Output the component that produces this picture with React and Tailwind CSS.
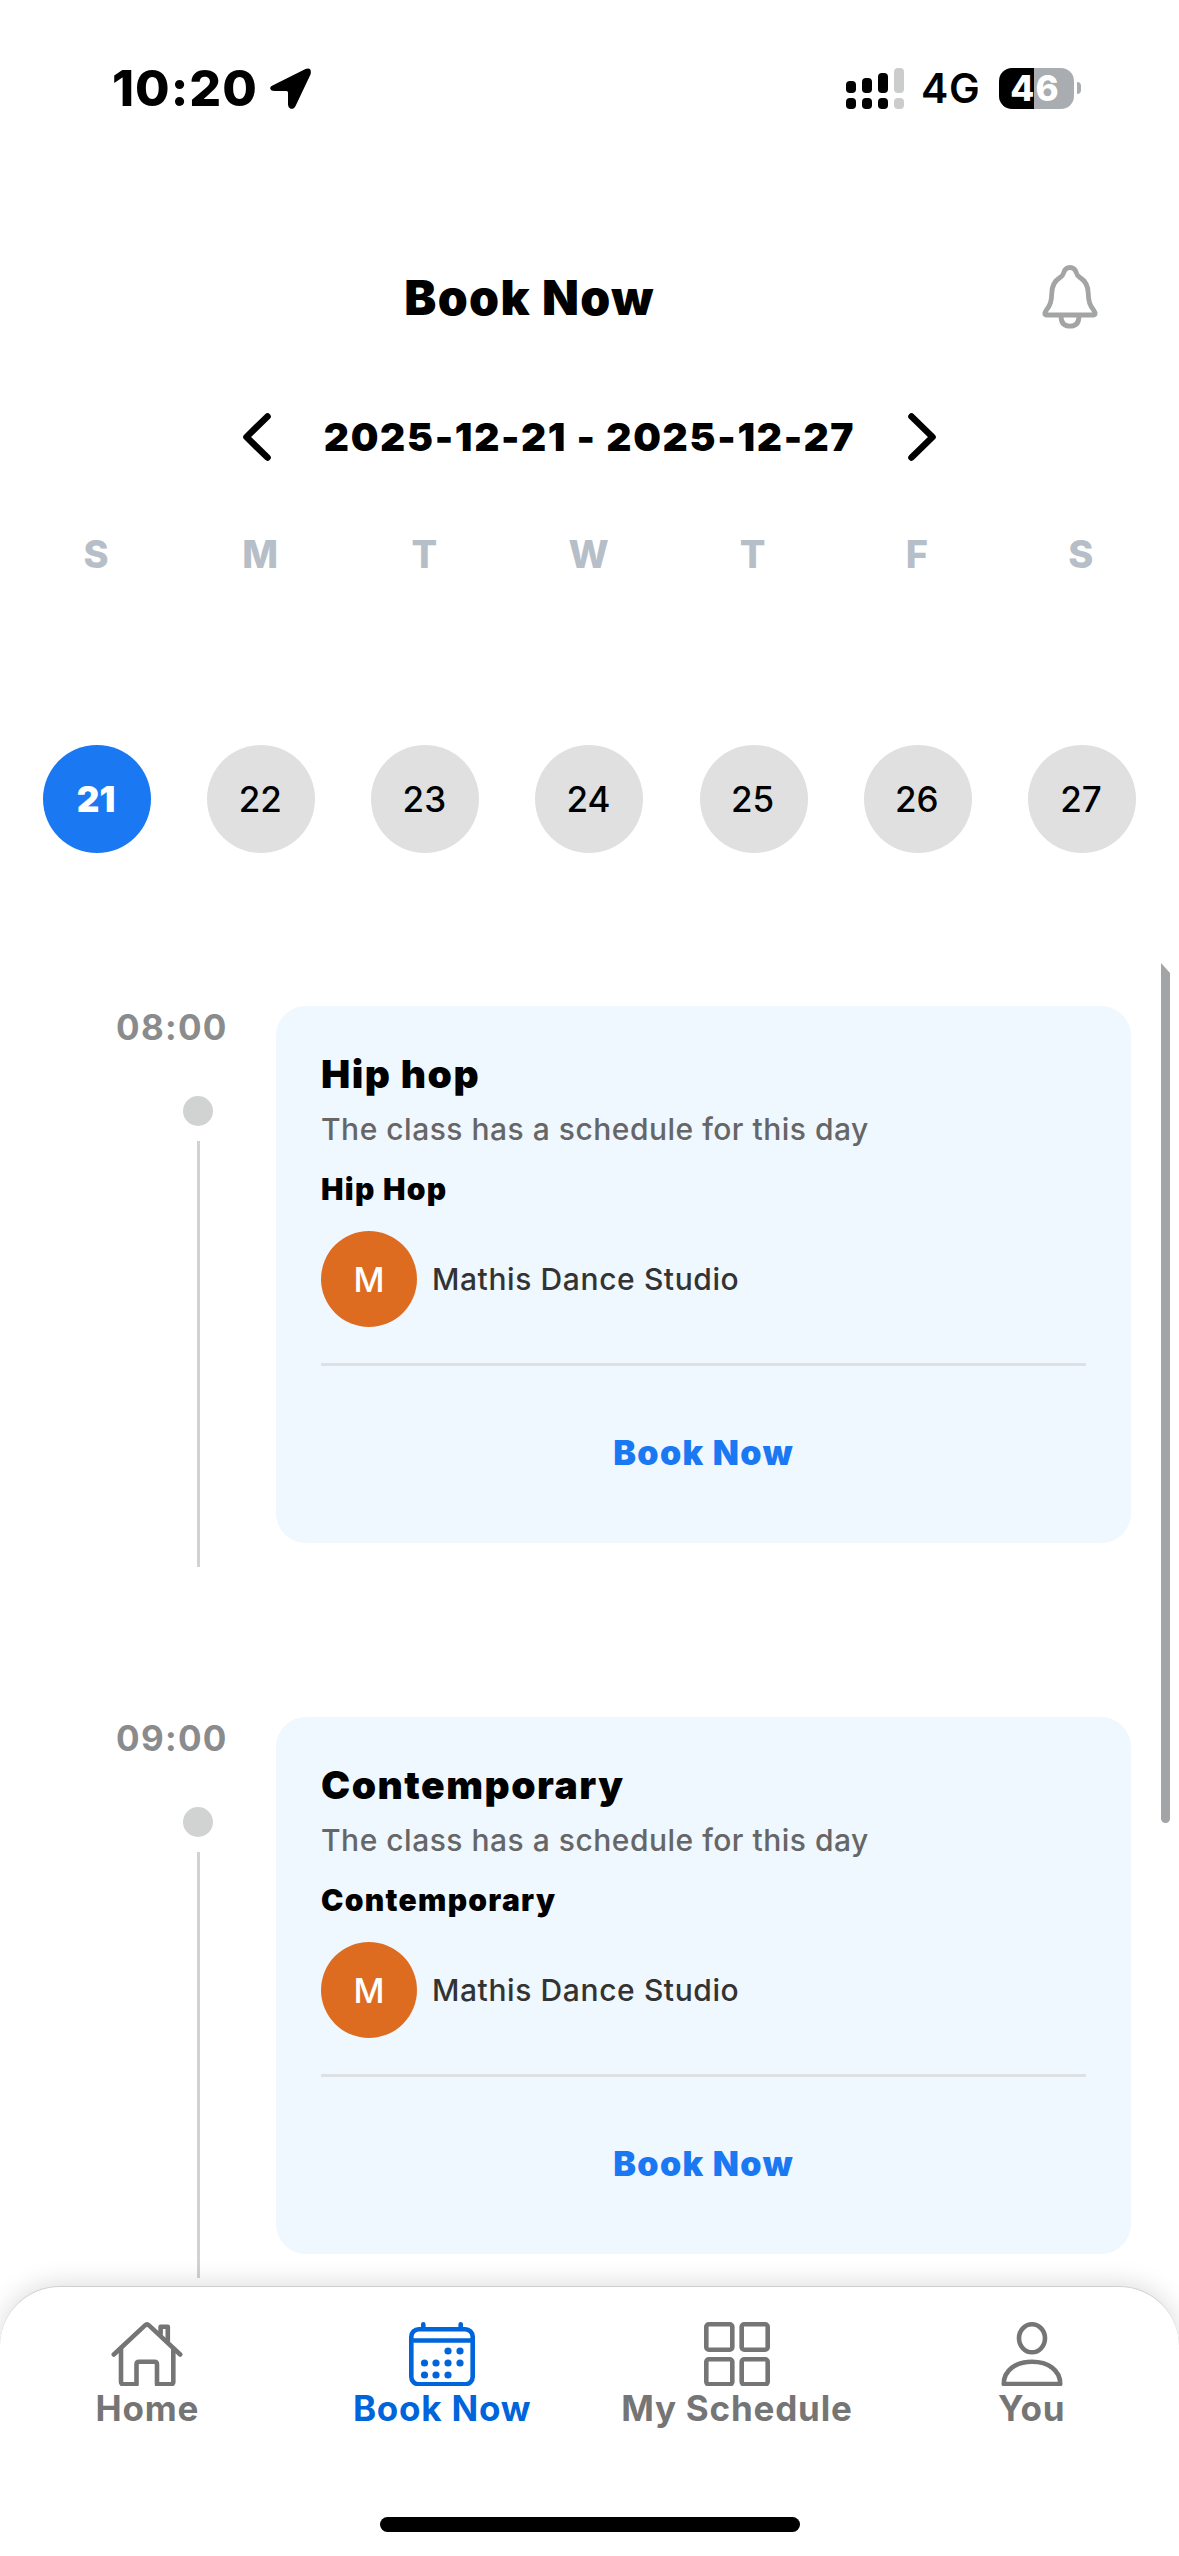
import React, { useState } from "react";

const weekDays = [
    { letter: "S", day: 21 },
    { letter: "M", day: 22 },
    { letter: "T", day: 23 },
    { letter: "W", day: 24 },
    { letter: "T", day: 25 },
    { letter: "F", day: 26 },
    { letter: "S", day: 27 },
];

const classes = [
    { time: "08:00", title: "Hip hop", style: "Hip Hop", studio: "Mathis Dance Studio" },
    { time: "09:00", title: "Contemporary", style: "Contemporary", studio: "Mathis Dance Studio" },
];

const StatusBar = () => (
    <div className="flex h-[176px] shrink-0 items-start justify-between pl-[112px] pr-[98px] pt-[64px]">
        <div className="flex h-[48px] items-center">
            <span className="w-[158px] text-[50px] font-extrabold leading-[48px] tracking-[1px]">10:20</span>
            <svg viewBox="0 0 41 41" className="h-[41px] w-[41px]">
                <path d="M3 17.3 L35.5 1 Q42 -1 40.6 6.2 L25.8 37.5 Q24 41.6 20.5 40.7 Q18 39.8 18 36.5 V24.5 Q18 23 16.5 23 H4.5 Q1 23 .2 20.5 Q-.2 18.6 3 17.3 Z" />
            </svg>
        </div>
        <div className="flex h-[48px] items-center">
            <svg viewBox="0 0 58 41" className="h-[41px] w-[58px]">
                <rect x="0" y="13" width="10" height="12" rx="4" />
                <rect x="16" y="10" width="10" height="15" rx="4" />
                <rect x="32" y="5" width="10" height="20" rx="4" />
                <rect x="48" y="0" width="10" height="25" rx="4" fill="#cbcccc" />
                <rect x="0" y="30" width="10" height="11" rx="4" />
                <rect x="16" y="30" width="10" height="11" rx="4" />
                <rect x="32" y="30" width="10" height="11" rx="4" />
                <rect x="48" y="30" width="10" height="11" rx="4" fill="#cbcccc" />
            </svg>
            <span className="ml-[17px] w-[78px] text-[41px] font-semibold leading-[50px] tracking-[0.8px]">4G</span>
            <div className="flex h-[41px] w-[75px] items-center justify-center rounded-[13px] bg-[linear-gradient(90deg,#000_35px,#a9acb0_35px)] pr-[3px] text-[35px] font-extrabold leading-[41px] tracking-[1px] text-white">
                46
            </div>
            <div className="ml-[3px] h-[12px] w-[4px] rounded-r-full bg-[#a9acb0]" />
        </div>
    </div>
);

const BellIcon = () => (
    <svg viewBox="0 0 56 64" className="mb-[2px] h-[64px] w-[56px]" fill="none" stroke="#a3a4a5" strokeWidth="4.8" strokeLinejoin="round">
        <path d="M28 2.5 C24.5 2.5 22.6 5 21.8 7.5 C21 10.5 20 11.3 18.2 12.4 C11.5 16.5 9.7 22 9.7 29 C9.7 37.5 8 41 4.5 44.8 Q1 50 5 50 H51 Q55 50 51.5 44.8 C48 41 46.3 37.5 46.3 29 C46.3 22 44.5 16.5 37.8 12.4 C36 11.3 35 10.5 34.2 7.5 C33.4 5 31.5 2.5 28 2.5 Z" />
        <path d="M19 51 C19 58.5 23 61.2 28 61.2 C33 61.2 37 58.5 37 51" />
    </svg>
);

const Chevron = ({ className }) => (
    <svg viewBox="0 0 28 48" className={className} fill="none" stroke="#000" strokeWidth="6.6" strokeLinecap="round" strokeLinejoin="round">
        <path d="M3.5 3.5 L24.5 24 L3.5 44.5" />
    </svg>
);

const ClassItem = ({ item }) => (
    <div className="mb-[150px] flex h-[561px] pr-[48px]">
        <div className="flex w-[276px] shrink-0 flex-col pl-[116px]">
            <span className="text-[35px] font-bold leading-[42px] tracking-[1.3px] text-[#8a8b8d]">{item.time}</span>
            <div className="ml-[67px] mt-[48px] h-[30px] w-[30px] rounded-full bg-[#d1d3d3]" />
            <div className="ml-[81px] mt-[15px] w-[3px] flex-1 bg-[#d1d3d3]" />
        </div>
        <div className="h-[537px] flex-1 rounded-[30px] bg-[#eff7ff] px-[45px] pt-[45px]">
            <h2 className="text-[39px] font-black leading-[46px] tracking-[1.5px]">{item.title}</h2>
            <p className="mt-[14px] text-[30px] font-medium leading-[36px] tracking-[0.5px] text-[#666]">The class has a schedule for this day</p>
            <p className="mt-[24px] text-[30px] font-black leading-[36px] tracking-[1.3px]">{item.style}</p>
            <div className="mt-[24px] flex items-center">
                <div className="flex h-[96px] w-[96px] items-center justify-center rounded-full bg-[#dd6c20] text-[34px] font-medium text-white">M</div>
                <span className="ml-[15px] text-[30px] font-medium tracking-[0.6px] text-[#333]">{item.studio}</span>
            </div>
            <div className="mt-[36px] h-[3px] bg-[#dfe0e1]" />
            <button type="button" className="mt-[66px] block w-full text-center text-[34px] font-black leading-[42px] tracking-[1.4px] text-[#1a78f2]">
                Book Now
            </button>
        </div>
    </div>
);

const HomeIcon = () => (
    <svg viewBox="0 0 72 64" className="h-[64px] w-[72px]" fill="none" stroke="currentColor" strokeWidth="4.6" strokeLinecap="round" strokeLinejoin="round">
        <path d="M2.8 32.5 L34 3.4 Q36 1.6 38 3.4 L69.2 32.5" />
        <path d="M10 27 V60 Q10 62.3 12.5 62.3 H25.5 V42.5 Q25.5 39.8 28 39.8 H43.5 Q46 39.8 46 42.5 V62.3 H60 Q62.3 62.3 62.3 60 V27" />
        <path d="M49.6 12 V4.8 H56.8 V19" />
    </svg>
);

const dots = [[39, 29], [51, 29], [15.5, 41], [27, 41], [39, 41], [51, 41], [15.5, 53], [27, 53], [39, 53]];

const CalendarIcon = () => (
    <svg viewBox="0 0 66 64" className="h-[64px] w-[66px]" fill="none" stroke="currentColor" strokeWidth="4.6" strokeLinecap="round">
        <rect x="2.3" y="7.2" width="61.4" height="55" rx="7.5" />
        <path d="M2.3 18.5 H63.7 M14.3 2.3 V6 M51.7 2.3 V6" />
        {dots.map(([cx, cy]) => (
            <circle key={`${cx}-${cy}`} cx={cx} cy={cy} r="3.6" fill="currentColor" stroke="none" />
        ))}
    </svg>
);

const GridIcon = () => (
    <svg viewBox="0 0 66 64" className="h-[64px] w-[66px]" fill="none" stroke="currentColor" strokeWidth="4.6">
        <rect x="2.3" y="2.3" width="26" height="25.4" rx="2.5" />
        <rect x="37.7" y="2.3" width="26" height="25.4" rx="2.5" />
        <rect x="2.3" y="37.3" width="26" height="25" rx="2.5" />
        <rect x="37.7" y="37.3" width="26" height="25" rx="2.5" />
    </svg>
);

const UserIcon = () => (
    <svg viewBox="0 0 62 64" className="h-[64px] w-[62px]" fill="none" stroke="currentColor" strokeWidth="4.6" strokeLinejoin="round">
        <ellipse cx="31" cy="16.3" rx="13" ry="14" />
        <path d="M2.8 62 C2.8 48 15 39.8 31 39.8 C47 39.8 59.2 48 59.2 62 Z" />
    </svg>
);

const tabs = [
    { label: "Home", Icon: HomeIcon },
    { label: "Book Now", Icon: CalendarIcon },
    { label: "My Schedule", Icon: GridIcon },
    { label: "You", Icon: UserIcon },
];

const TabBar = ({ active, setActive }) => (
    <nav className="relative flex h-[270px] shrink-0 flex-col items-center rounded-t-[60px] border-t border-[#cfcfcf] bg-white shadow-[0_-2px_26px_rgba(0,0,0,0.14)]">
        <div className="flex w-full pt-[35px]">
            {tabs.map(({ label, Icon }) => (
                <button
                    key={label}
                    type="button"
                    onClick={() => setActive(label)}
                    className={`flex flex-1 flex-col items-center ${active === label ? "text-[#0064da]" : "text-[#757575]"}`}
                >
                    <Icon />
                    <span className="mt-[1px] whitespace-nowrap text-[35px] font-bold leading-[42px] tracking-[0.8px]">{label}</span>
                </button>
            ))}
        </div>
        {/* Home indicator */}
        <div className="mt-auto mb-[24px] h-[15px] w-[420px] rounded-full bg-black" />
    </nav>
);

const App = () => {
    const [selected, setSelected] = useState(21);
    const [active, setActive] = useState("Book Now");

    return (
        <div className="flex h-[2556px] w-[1179px] flex-col overflow-hidden bg-white font-['Inter',sans-serif] text-black">
            <StatusBar />

            <header className="flex h-[237px] shrink-0 items-center pr-[81px] pt-[6px]">
                <h1 className="flex-1 pl-[17px] text-center text-[48px] font-black tracking-[1.4px]">Book Now</h1>
                <BellIcon />
            </header>

            <div className="flex h-[48px] shrink-0 items-center justify-center">
                <Chevron className="h-[48px] w-[28px] rotate-180" />
                <span className="w-[637px] text-center text-[39px] font-black leading-[48px] tracking-[1.7px]">2025-12-21 - 2025-12-27</span>
                <Chevron className="h-[48px] w-[28px]" />
            </div>

            <div className="mt-[69px] grid shrink-0 grid-cols-7 px-[15px]">
                {weekDays.map(({ letter, day }) => (
                    <div key={day} className="flex flex-col items-center">
                        <span className="pr-[2px] text-[38px] font-extrabold leading-[48px] text-[#b6bec8]">{letter}</span>
                        <button
                            type="button"
                            onClick={() => setSelected(day)}
                            className={`mt-[167px] h-[108px] w-[108px] rounded-full pr-[2px] text-[35px] ${selected === day ? "bg-[#1a78f2] font-black text-white" : "bg-[#e0e0e0] font-medium"}`}
                        >
                            {day}
                        </button>
                    </div>
                ))}
            </div>

            <main className="relative mt-[110px] min-h-0 flex-1 pt-[43px]">
                {classes.map((item) => (
                    <ClassItem key={item.time} item={item} />
                ))}
                {/* Scroll thumb */}
                <div className="absolute right-[9px] top-0 h-[860px] w-[9px] rounded-b-full bg-[#a3a4a5] [clip-path:polygon(0_0,100%_10px,100%_100%,0_100%)]" />
            </main>

            <TabBar active={active} setActive={setActive} />
        </div>
    );
};

export default App;
